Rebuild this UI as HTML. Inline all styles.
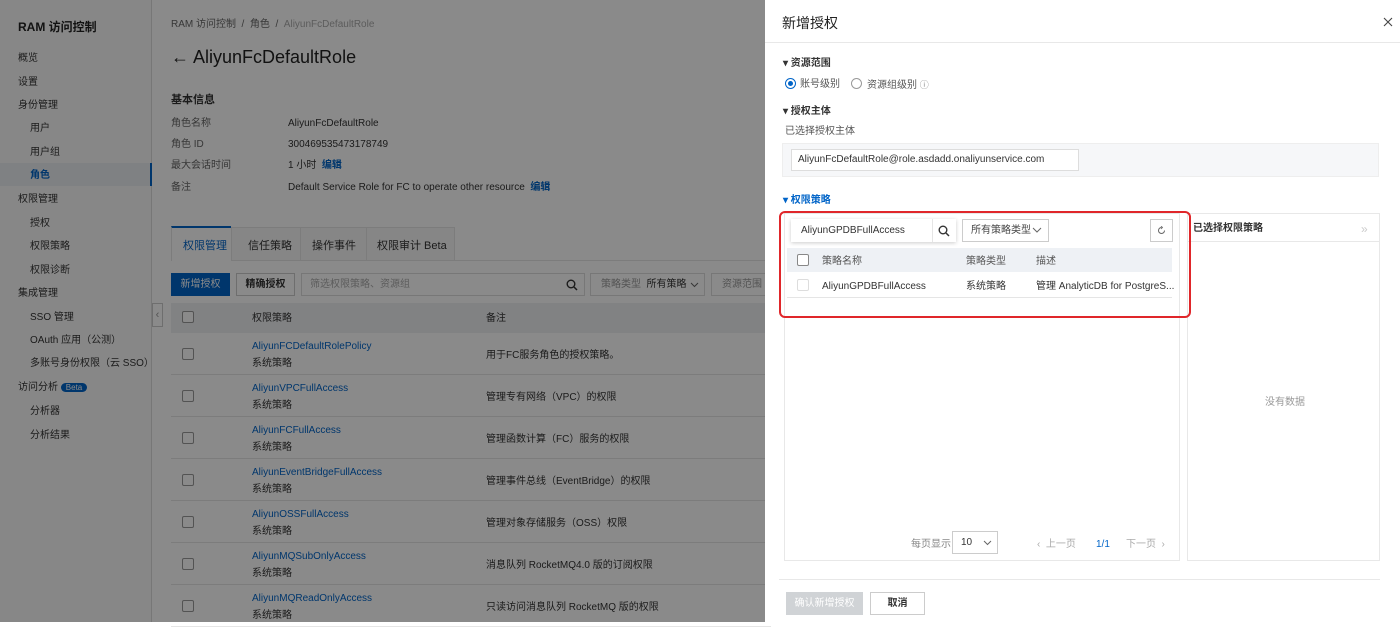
<!DOCTYPE html>
<html><head><meta charset="utf-8"><style>
*{box-sizing:border-box;margin:0;padding:0}
body{width:1400px;height:622px;overflow:hidden;position:relative;background:#fff;font-family:"Liberation Sans","Noto Sans CJK SC",sans-serif;color:#333;font-size:10px}
.a{position:absolute;white-space:nowrap;line-height:12px;margin-top:2px}
.sb{position:absolute;left:0;top:0;width:152px;height:622px;background:#fafafa;border-right:1px solid #ddd}
.blue{color:#0064c8}
.cb{position:absolute;width:12px;height:12px;border:1px solid #999;border-radius:2px;background:#fff}
.ov{position:absolute;left:0;top:0;width:765px;height:622px;background:rgba(0,0,0,0.46)}
.dr{position:absolute;left:765px;top:0;width:635px;height:622px;background:#fff}
.row{position:absolute;left:171px;width:600px;height:42px;border-bottom:1px solid #e5e5e5}
svg{position:absolute}
</style></head><body>
<div class="sb">
<div class="a" style="left:18px;top:18px;font-size:12px;line-height:14px;font-weight:bold;color:#222">RAM 访问控制</div>
<div class="a" style="left:18px;top:51px">概览</div>
<div class="a" style="left:18px;top:75px">设置</div>
<div class="a" style="left:18px;top:98px">身份管理</div>
<div class="a" style="left:30px;top:121px">用户</div>
<div class="a" style="left:30px;top:145px">用户组</div>
<div style="position:absolute;left:0;top:163px;width:152px;height:23px;background:#ebeef2;border-right:2px solid #0064c8"></div>
<div class="a blue" style="left:30px;top:168px;font-weight:bold">角色</div>
<div class="a" style="left:18px;top:192px">权限管理</div>
<div class="a" style="left:30px;top:216px">授权</div>
<div class="a" style="left:30px;top:239px">权限策略</div>
<div class="a" style="left:30px;top:263px">权限诊断</div>
<div class="a" style="left:18px;top:286px">集成管理</div>
<div class="a" style="left:30px;top:310px">SSO 管理</div>
<div class="a" style="left:30px;top:333px">OAuth 应用（公测）</div>
<div class="a" style="left:30px;top:356px">多账号身份权限（云 SSO）</div>
<div class="a" style="left:18px;top:380px">访问分析 <span style="background:#0064c8;color:#fff;border-radius:6px;padding:0 5px;font-size:8px">Beta</span></div>
<div class="a" style="left:30px;top:404px">分析器</div>
<div class="a" style="left:30px;top:428px">分析结果</div>
</div>
<div style="position:absolute;left:152px;top:303px;width:11px;height:24px;border:1px solid #ccc;background:#fff;color:#999;font-size:11px;text-align:center;line-height:22px">‹</div>
<div class="a" style="left:171px;top:17px;color:#666">RAM 访问控制 &nbsp;/&nbsp; 角色 &nbsp;/&nbsp; <span style="color:#aaa">AliyunFcDefaultRole</span></div>
<div class="a" style="left:171px;top:44px;font-size:18px;line-height:22px;color:#222">← AliyunFcDefaultRole</div>
<div class="a" style="left:171px;top:92px;font-size:11px;font-weight:bold">基本信息</div>
<div class="a" style="left:171px;top:116px;color:#666">角色名称</div><div class="a" style="left:288px;top:116px">AliyunFcDefaultRole</div>
<div class="a" style="left:171px;top:137px;color:#666">角色 ID</div><div class="a" style="left:288px;top:137px">300469535473178749</div>
<div class="a" style="left:171px;top:158px;color:#666">最大会话时间</div><div class="a" style="left:288px;top:158px">1 小时 &nbsp;<b class="blue">编辑</b></div>
<div class="a" style="left:171px;top:180px;color:#666">备注</div><div class="a" style="left:288px;top:180px">Default Service Role for FC to operate other resource &nbsp;<b class="blue">编辑</b></div>
<div style="position:absolute;left:171px;top:260px;width:600px;border-top:1px solid #e5e5e5"></div>
<div style="position:absolute;left:171px;top:226px;width:60px;height:35px;background:#fff;border-top:2px solid #0064c8;border-left:1px solid #e5e5e5"></div>
<div style="position:absolute;left:231px;top:227px;width:224px;height:34px;background:#f7f7f7;border:1px solid #e5e5e5"></div>
<div style="position:absolute;left:300px;top:227px;height:34px;border-left:1px solid #e5e5e5"></div>
<div style="position:absolute;left:366px;top:227px;height:34px;border-left:1px solid #e5e5e5"></div>
<div class="a blue" style="left:183px;top:238px;font-size:11px">权限管理</div>
<div class="a" style="left:248px;top:238px;font-size:11px">信任策略</div>
<div class="a" style="left:312px;top:238px;font-size:11px">操作事件</div>
<div class="a" style="left:377px;top:238px;font-size:11px">权限审计 Beta</div>
<div style="position:absolute;left:171px;top:273px;width:59px;height:23px;background:#0064c8;color:#fff;text-align:center;line-height:23px">新增授权</div>
<div style="position:absolute;left:236px;top:273px;width:59px;height:23px;border:1px solid #ccc;background:#fff;text-align:center;line-height:21px;font-weight:bold">精确授权</div>
<div style="position:absolute;left:301px;top:273px;width:284px;height:23px;border:1px solid #ddd;background:#fff;color:#aaa;line-height:21px;padding-left:8px">筛选权限策略、资源组</div>
<svg style="left:566px;top:279px" width="12" height="12" viewBox="0 0 12 12"><circle cx="5" cy="5" r="3.8" fill="none" stroke="#333" stroke-width="1.4"/><path d="M8 8l3 3" stroke="#333" stroke-width="1.5"/></svg>
<div style="position:absolute;left:590px;top:273px;width:115px;height:23px;border:1px solid #ddd;background:#fff;line-height:21px;padding-left:10px"><span style="color:#999">策略类型</span> &nbsp;所有策略</div>
<svg style="left:690px;top:282px" width="9" height="6" viewBox="0 0 9 6"><path d="M1 1l3.5 3.5L8 1" fill="none" stroke="#666"/></svg>
<div style="position:absolute;left:711px;top:273px;width:60px;height:23px;border:1px solid #ddd;background:#fff;line-height:21px;padding-left:10px;color:#999">资源范围</div>
<div style="position:absolute;left:171px;top:303px;width:600px;height:30px;background:#eef0f3"></div>
<div class="cb" style="left:182px;top:311px"></div>
<div class="a" style="left:252px;top:311px">权限策略</div><div class="a" style="left:486px;top:311px">备注</div>
<div class="row" style="top:333px"></div><div class="cb" style="left:182px;top:348px"></div><div class="a blue" style="left:252px;top:339px">AliyunFCDefaultRolePolicy</div><div class="a" style="left:252px;top:356px">系统策略</div><div class="a" style="left:486px;top:348px">用于FC服务角色的授权策略。</div>
<div class="row" style="top:375px"></div><div class="cb" style="left:182px;top:390px"></div><div class="a blue" style="left:252px;top:381px">AliyunVPCFullAccess</div><div class="a" style="left:252px;top:398px">系统策略</div><div class="a" style="left:486px;top:390px">管理专有网络（VPC）的权限</div>
<div class="row" style="top:417px"></div><div class="cb" style="left:182px;top:432px"></div><div class="a blue" style="left:252px;top:423px">AliyunFCFullAccess</div><div class="a" style="left:252px;top:440px">系统策略</div><div class="a" style="left:486px;top:432px">管理函数计算（FC）服务的权限</div>
<div class="row" style="top:459px"></div><div class="cb" style="left:182px;top:474px"></div><div class="a blue" style="left:252px;top:465px">AliyunEventBridgeFullAccess</div><div class="a" style="left:252px;top:482px">系统策略</div><div class="a" style="left:486px;top:474px">管理事件总线（EventBridge）的权限</div>
<div class="row" style="top:501px"></div><div class="cb" style="left:182px;top:516px"></div><div class="a blue" style="left:252px;top:507px">AliyunOSSFullAccess</div><div class="a" style="left:252px;top:524px">系统策略</div><div class="a" style="left:486px;top:516px">管理对象存储服务（OSS）权限</div>
<div class="row" style="top:543px"></div><div class="cb" style="left:182px;top:558px"></div><div class="a blue" style="left:252px;top:549px">AliyunMQSubOnlyAccess</div><div class="a" style="left:252px;top:566px">系统策略</div><div class="a" style="left:486px;top:558px">消息队列 RocketMQ4.0 版的订阅权限</div>
<div class="row" style="top:585px"></div><div class="cb" style="left:182px;top:600px"></div><div class="a blue" style="left:252px;top:591px">AliyunMQReadOnlyAccess</div><div class="a" style="left:252px;top:608px">系统策略</div><div class="a" style="left:486px;top:600px">只读访问消息队列 RocketMQ 版的权限</div>
<div class="ov"></div>

<div class="dr">
<div class="a" style="left:17px;top:13px;font-size:14px;line-height:16px;color:#222">新增授权</div>
<svg style="left:618px;top:17px" width="10" height="10" viewBox="0 0 10 10"><path d="M1 1l8 8M9 1l-8 8" stroke="#444" stroke-width="1.1"/></svg>
<div style="position:absolute;left:0;top:42px;width:635px;border-top:1px solid #e8e8e8"></div>
<div class="a" style="left:18px;top:56px;font-weight:bold">▾ 资源范围</div>
<div style="position:absolute;left:20px;top:78px;width:11px;height:11px;border-radius:50%;border:1px solid #0064c8"><div style="margin:2px;width:5px;height:5px;border-radius:50%;background:#0064c8"></div></div>
<div class="a" style="left:35px;top:77px;color:#555">账号级别</div>
<div style="position:absolute;left:86px;top:78px;width:11px;height:11px;border-radius:50%;border:1px solid #999"></div>
<div class="a" style="left:102px;top:77px;color:#555">资源组级别 <span style="font-size:9px;color:#888">ⓘ</span></div>
<div class="a" style="left:18px;top:104px;font-weight:bold">▾ 授权主体</div>
<div class="a" style="left:20px;top:124px;color:#555">已选择授权主体</div>
<div style="position:absolute;left:17px;top:143px;width:597px;height:34px;background:#f6f7f9;border:1px solid #eee"></div>
<div style="position:absolute;left:26px;top:149px;width:288px;height:22px;background:#fff;border:1px solid #ddd;line-height:20px;padding-left:6px">AliyunFcDefaultRole@role.asdadd.onaliyunservice.com</div>
<div class="a blue" style="left:18px;top:193px;font-weight:bold">▾ 权限策略</div>
<div style="position:absolute;left:19px;top:213px;width:396px;height:348px;border:1px solid #e8e8e8"></div>
<div style="position:absolute;left:422px;top:213px;width:193px;height:348px;border:1px solid #e8e8e8"></div>
<div style="position:absolute;left:422px;top:241px;width:193px;border-top:1px solid #e8e8e8"></div>
<div class="a" style="left:428px;top:221px;font-weight:bold">已选择权限策略</div>
<div class="a" style="left:596px;top:221px;color:#ccc;font-size:12px">»</div>
<div class="a" style="left:500px;top:395px;color:#999">没有数据</div>
<div style="position:absolute;left:26px;top:219px;width:165px;height:23px;background:#fff;box-shadow:0 1px 4px rgba(0,0,0,.2);line-height:23px;padding-left:10px">AliyunGPDBFullAccess<span style="position:absolute;left:141px;top:0;height:23px;border-left:1px solid #e5e5e5;width:24px"></span></div>
<svg style="left:173px;top:225px" width="12" height="12" viewBox="0 0 12 12"><circle cx="5" cy="5" r="3.8" fill="none" stroke="#333" stroke-width="1.4"/><path d="M8 8l3 3" stroke="#333" stroke-width="1.5"/></svg>
<div style="position:absolute;left:197px;top:219px;width:87px;height:23px;border:1px solid #ccc;line-height:21px;padding-left:8px;color:#444">所有策略类型</div>
<svg style="left:267px;top:227px" width="10" height="6" viewBox="0 0 10 6"><path d="M1 1l4 4 4-4" fill="none" stroke="#666"/></svg>
<div style="position:absolute;left:385px;top:219px;width:23px;height:23px;border:1px solid #ccc"></div>
<svg style="left:392px;top:226px" width="9" height="9" viewBox="0 0 9 9"><path d="M7.5 4.5A3 3 0 1 1 4.5 1.5" fill="none" stroke="#666"/><path d="M4 0l1.5 1.5L4 3" fill="none" stroke="#666" stroke-width=".8"/></svg>
<div style="position:absolute;left:22px;top:248px;width:385px;height:24px;background:#eef1f5"></div>
<div class="cb" style="left:32px;top:254px;border-color:#888"></div>
<div class="a" style="left:57px;top:254px;color:#555">策略名称</div><div class="a" style="left:201px;top:254px;color:#555">策略类型</div><div class="a" style="left:271px;top:254px;color:#555">描述</div>
<div style="position:absolute;left:22px;top:297px;width:385px;border-top:1px solid #e5e5e5"></div>
<div class="cb" style="left:32px;top:279px;border-color:#ddd"></div>
<div class="a" style="left:57px;top:279px">AliyunGPDBFullAccess</div><div class="a" style="left:201px;top:279px">系统策略</div><div class="a" style="left:271px;top:279px">管理 AnalyticDB for PostgreS...</div>
<div style="position:absolute;left:14px;top:211px;width:412px;height:107px;border:2px solid #e0262a;border-radius:6px"></div>
<div class="a" style="left:146px;top:537px;color:#888">每页显示</div>
<div style="position:absolute;left:187px;top:531px;width:46px;height:23px;border:1px solid #ccc;line-height:21px;padding-left:8px">10</div>
<svg style="left:218px;top:540px" width="9" height="6" viewBox="0 0 9 6"><path d="M1 1l3.5 3.5L8 1" fill="none" stroke="#666"/></svg>
<div class="a" style="left:272px;top:537px;color:#aaa">‹ &nbsp;上一页</div>
<div class="a blue" style="left:331px;top:537px">1/1</div>
<div class="a" style="left:361px;top:537px;color:#aaa">下一页 &nbsp;›</div>
<div style="position:absolute;left:14px;top:579px;width:601px;border-top:1px solid #e8e8e8"></div>
<div style="position:absolute;left:21px;top:592px;width:77px;height:23px;background:#d0d3d6;color:#fff;text-align:center;line-height:23px">确认新增授权</div>
<div style="position:absolute;left:105px;top:592px;width:55px;height:23px;border:1px solid #ccc;text-align:center;line-height:21px;font-weight:bold">取消</div>
</div>
</body></html>
